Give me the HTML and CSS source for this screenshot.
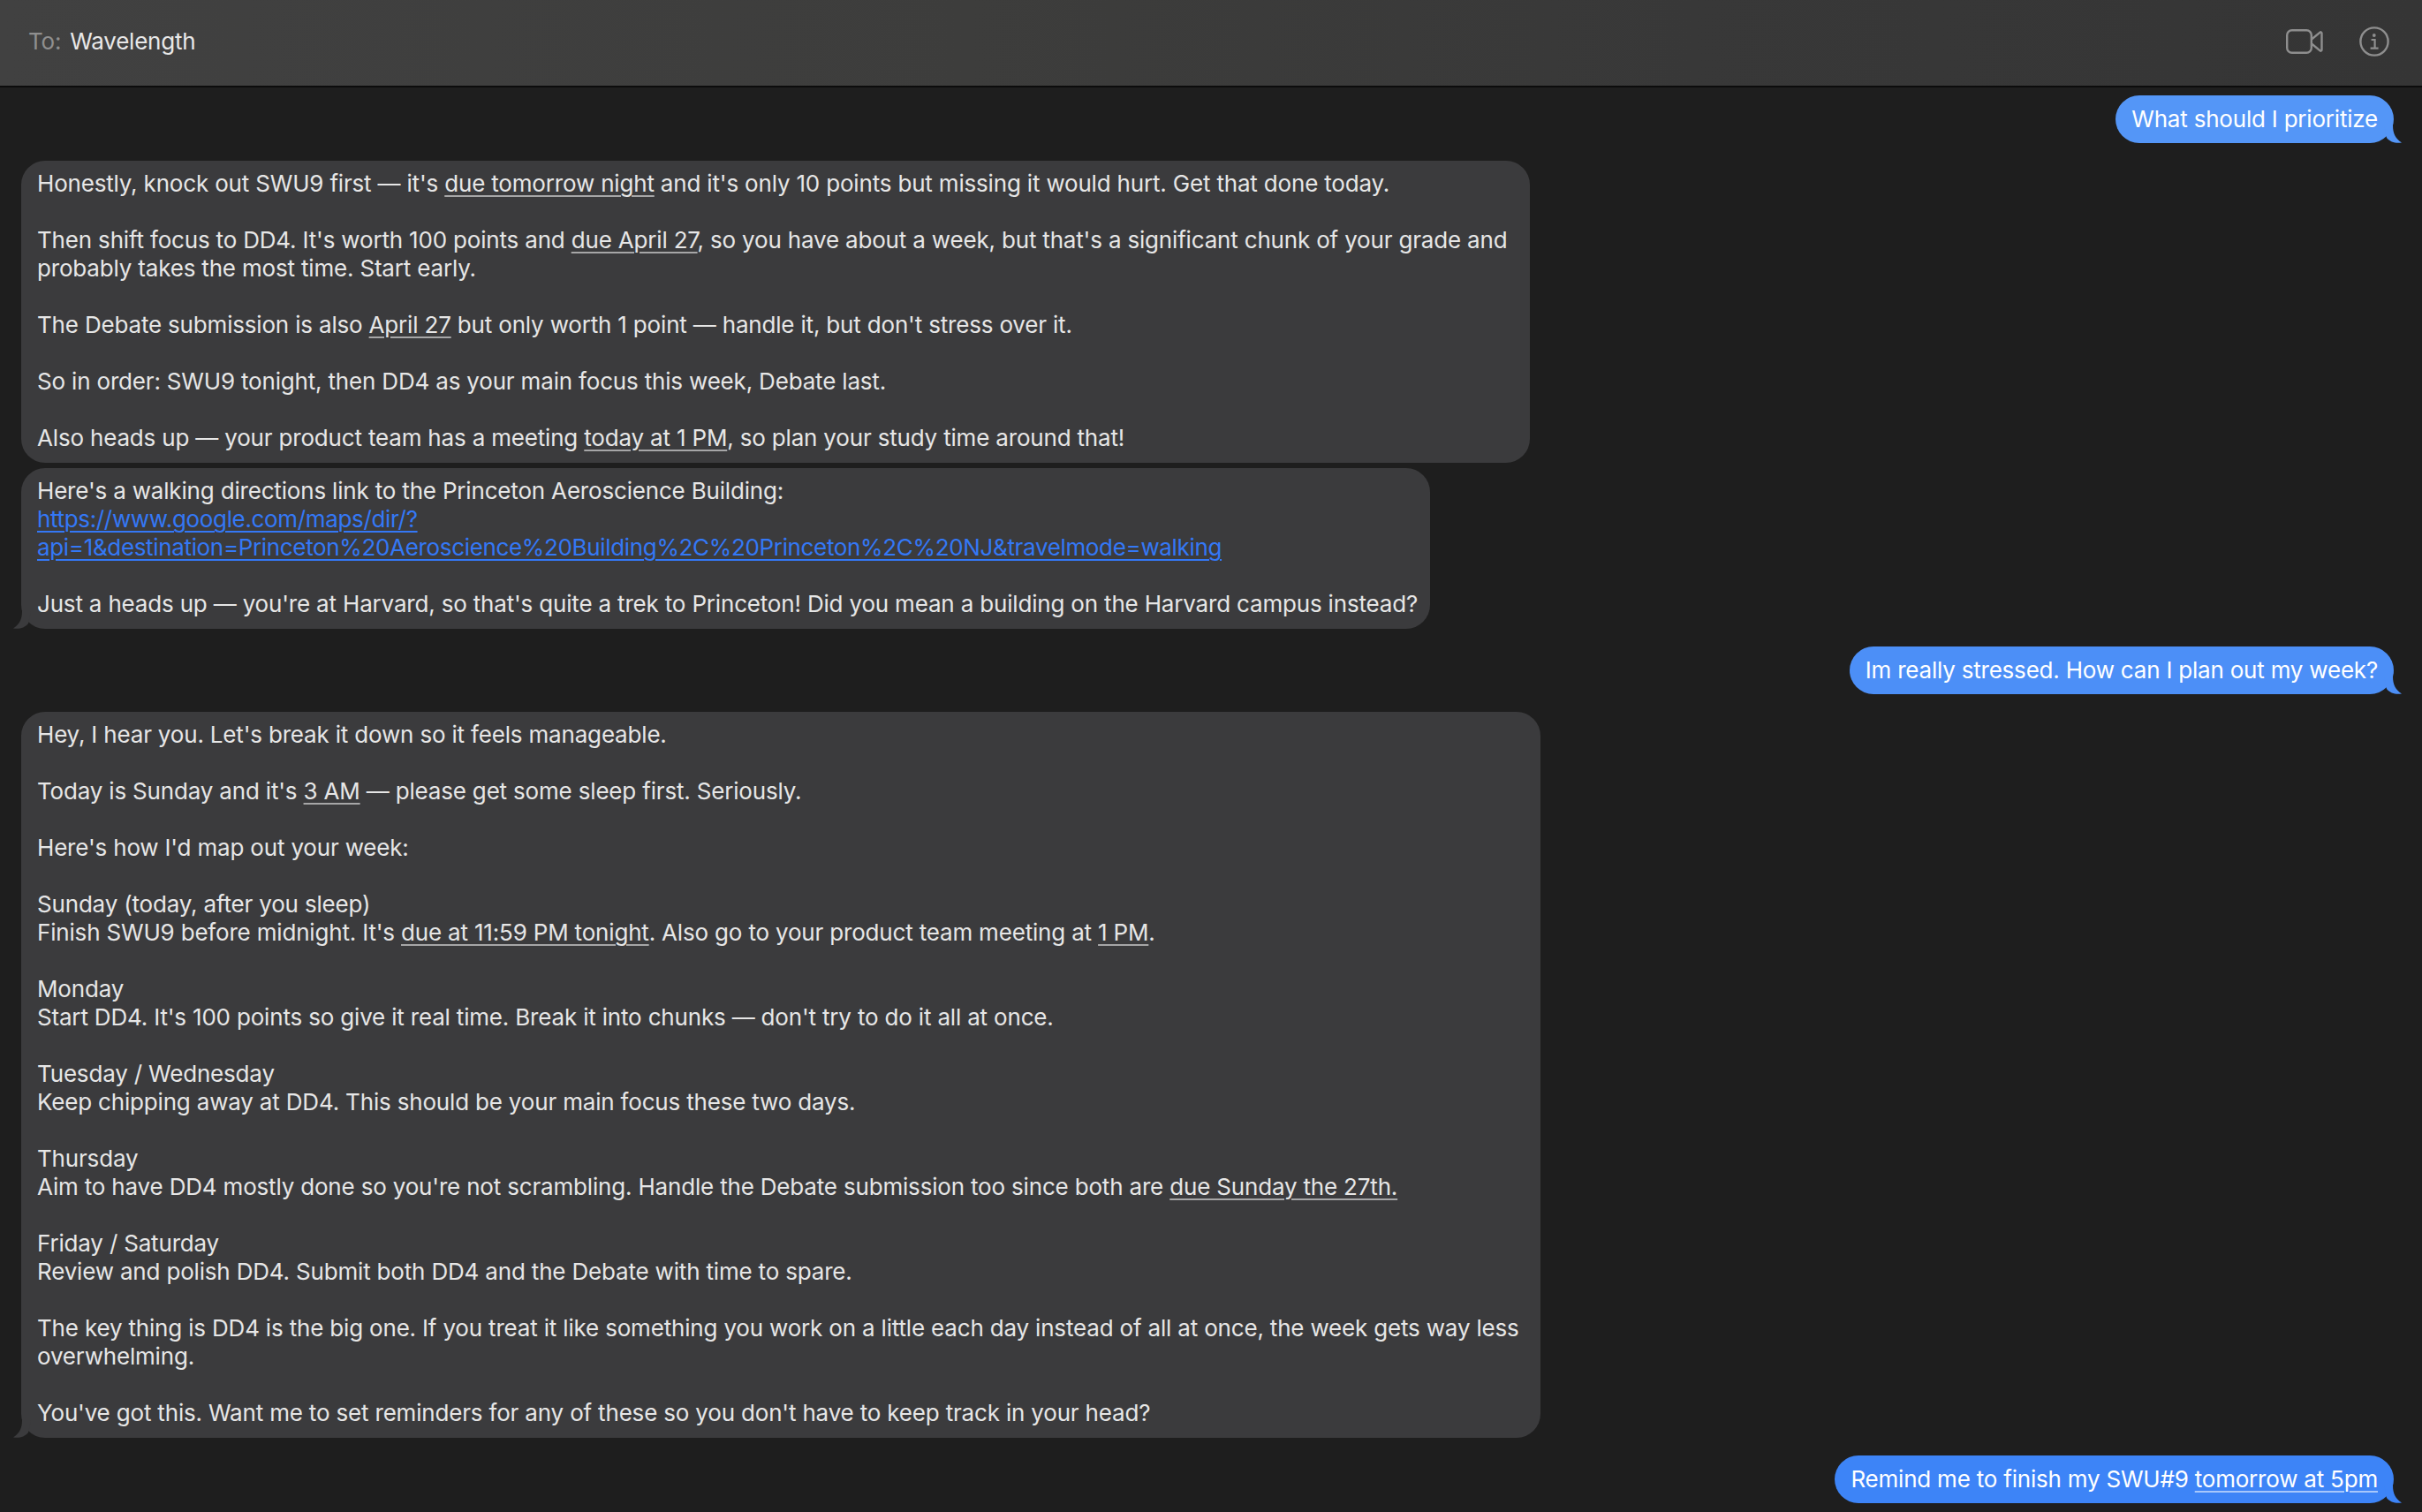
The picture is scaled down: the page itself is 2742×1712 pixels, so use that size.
FILE: index.html
```html
<!DOCTYPE html>
<html lang="en">
<head>
<meta charset="utf-8">
<title>Messages</title>
<link rel="stylesheet" href="styles.css">
</head>
<body>
<div class="app">
  <header class="header">
    <div class="to"><span class="to-label">To:</span><span class="to-name">Wavelength</span></div>
    <div class="actions">
      <svg class="icon-video" width="42" height="28" viewBox="0 0 42 28" fill="none" stroke="#8e8e8e" stroke-width="2.4" stroke-linejoin="round"><rect x="1.2" y="1.2" width="27.6" height="25.6" rx="5.5"/><path d="M29 11.5 38.6 3.6c.8-.6 1.9-.1 1.9 1v18.8c0 1.1-1.1 1.6-1.9 1L29 16.5"/></svg>
      <svg class="icon-info" width="34" height="34" viewBox="0 0 34 34" fill="none" stroke="#8e8e8e" stroke-width="2.4"><circle cx="17" cy="17" r="15.6"/><circle cx="16.800" cy="10" r="1.9" fill="#8e8e8e" stroke="none"/><path d="M13.6 15h4v9.4M12.6 24.6h9" stroke-width="2.2"/></svg>
    </div>
  </header>
  <main class="thread">
    <div class="row sent first"><div class="bubble blue light">What should I prioritize<svg class="tail tail-r" width="20" height="20" viewBox="0 0 20 20"><path d="M0 0h10c0 9 3 15 10 19.500C13 20.500 7 19 3 14z" fill="#5496f7"/></svg></div></div>

    <div class="row recv gap-l"><div class="bubble grey w1">Honestly, knock out SWU9 first — it's <u>due tomorrow night</u> and it's only 10 points but missing it would hurt. Get that done today.<br><br>Then shift focus to DD4. It's worth 100 points and <u>due April 27</u>, so you have about a week, but that's a significant chunk of your grade and<br>probably takes the most time. Start early.<br><br>The Debate submission is also <u>April 27</u> but only worth 1 point — handle it, but don't stress over it.<br><br>So in order: SWU9 tonight, then DD4 as your main focus this week, Debate last.<br><br>Also heads up — your product team has a meeting <u>today at 1 PM</u>, so plan your study time around that!</div></div>

    <div class="row recv gap-s"><div class="bubble grey w2">Here's a walking directions link to the Princeton Aeroscience Building:<br><a href="#">https://www.google.com/maps/dir/?<br>api=1&amp;destination=Princeton%20Aeroscience%20Building%2C%20Princeton%2C%20NJ&amp;travelmode=walking</a><br><br>Just a heads up — you're at Harvard, so that's quite a trek to Princeton! Did you mean a building on the Harvard campus instead?<svg class="tail tail-l" width="20" height="20" viewBox="0 0 20 20"><path d="M20 0H10c0 9-3 15-10 19.500C7 20.500 13 19 17 14z" fill="#3b3b3d"/></svg></div></div>

    <div class="row sent gap-l"><div class="bubble blue mid">Im really stressed. How can I plan out my week?<svg class="tail tail-r" width="20" height="20" viewBox="0 0 20 20"><path d="M0 0h10c0 9 3 15 10 19.500C13 20.500 7 19 3 14z" fill="#4c8ff7"/></svg></div></div>

    <div class="row recv gap-l"><div class="bubble grey w3">Hey, I hear you. Let's break it down so it feels manageable.<br><br>Today is Sunday and it's <u>3 AM</u> — please get some sleep first. Seriously.<br><br>Here's how I'd map out your week:<br><br>Sunday (today, after you sleep)<br>Finish SWU9 before midnight. It's <u>due at 11:59 PM tonight</u>. Also go to your product team meeting at <u>1 PM</u>.<br><br>Monday<br>Start DD4. It's 100 points so give it real time. Break it into chunks — don't try to do it all at once.<br><br>Tuesday / Wednesday<br>Keep chipping away at DD4. This should be your main focus these two days.<br><br>Thursday<br>Aim to have DD4 mostly done so you're not scrambling. Handle the Debate submission too since both are <u>due Sunday the 27th.</u><br><br>Friday / Saturday<br>Review and polish DD4. Submit both DD4 and the Debate with time to spare.<br><br>The key thing is DD4 is the big one. If you treat it like something you work on a little each day instead of all at once, the week gets way less<br>overwhelming.<br><br>You've got this. Want me to set reminders for any of these so you don't have to keep track in your head?<svg class="tail tail-l" width="20" height="20" viewBox="0 0 20 20"><path d="M20 0H10c0 9-3 15-10 19.500C7 20.500 13 19 17 14z" fill="#3b3b3d"/></svg></div></div>

    <div class="row sent gap-l"><div class="bubble blue">Remind me to finish my SWU#9 <u>tomorrow at 5pm</u><svg class="tail tail-r" width="20" height="20" viewBox="0 0 20 20"><path d="M0 0h10c0 9 3 15 10 19.500C13 20.500 7 19 3 14z" fill="#3d84f7"/></svg></div></div>
  </main>
</div>
</body>
</html>
```
FILE: styles.css
```css
* { box-sizing: border-box; }
html, body { margin: 0; height: 100%; background: #1e1e1e; }
body { font-family: Inter, "Liberation Sans", sans-serif; overflow: hidden; }
.app { width: 2742px; height: 1712px; display: flex; flex-direction: column; overflow: hidden; }

.header {
  height: 99px;
  flex: none;
  display: flex;
  align-items: center;
  justify-content: space-between;
  padding: 0 37px 4px 32px;
  background: linear-gradient(90deg, #414141 0%, #3d3d3c 40%, #383838 70%, #353535 100%);
  border-bottom: 2px solid #0c0c0c;
  font-size: 26px;
  letter-spacing: -0.22px;
}
.to { display: flex; gap: 10px; }
.to-label { color: #8f8f8f; }
.to-name { color: #e8e8e8; }
.actions { display: flex; align-items: center; gap: 41px; }
.icon-video, .icon-info { display: block; }

.thread { flex: 1; display: flex; flex-direction: column; padding: 9px 32px 0 24px; }
.row { display: flex; flex: none; }
.sent { justify-content: flex-end; }
.recv { justify-content: flex-start; }
.gap-l { margin-top: 20px; }
.gap-s { margin-top: 6px; }
.first { margin-top: 0; }

.bubble {
  position: relative;
  flex: none;
  padding: 11px 18px;
  font-size: 26px;
  line-height: 32px;
  letter-spacing: -0.21px;
  white-space: nowrap;
  border-radius: 27px;
}
.grey { background: #3b3b3d; color: #e6e6e6; padding: 10px 18px 12px; letter-spacing: -0.18px; }
.blue { background: #3d84f7; color: #fff; }
.blue.light { background: #5496f7; }
.blue.mid { background: #4c8ff7; }
.w1 { width: 1708px; }
.w2 { width: 1595px; }
.w3 { width: 1720px; }

u { text-decoration-thickness: 2px; text-underline-offset: 4px; text-decoration-color: rgba(255,255,255,.55); }
a { color: #3478f6; letter-spacing: -0.34px; text-decoration-thickness: 2px; text-underline-offset: 4px; }

.tail { position: absolute; bottom: 0; display: block; }
.tail-r { right: -9px; }
.tail-l { left: -9px; }
```
